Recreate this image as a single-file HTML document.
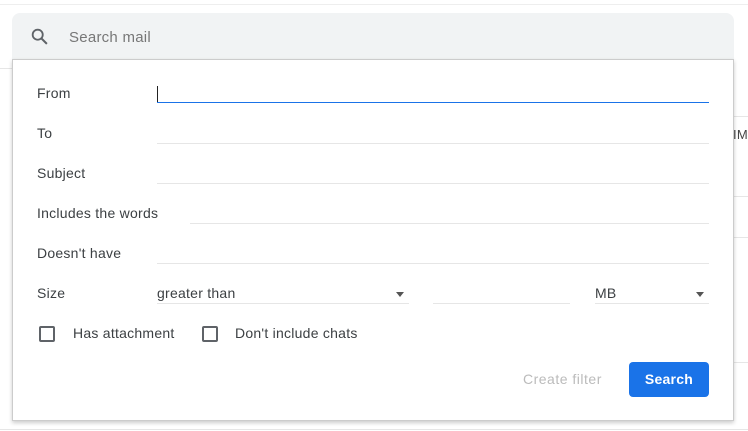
<!DOCTYPE html>
<html><head><style>
body{margin:0;width:748px;height:431px;background:#fff;position:relative;overflow:hidden;font-family:"Liberation Sans",Arial,sans-serif;font-size:14px;color:#222;letter-spacing:0.25px}
.a{position:absolute}
.lab{position:absolute;left:37px;color:#3c4043;font-size:14px}
.ln{position:absolute;height:1px;background:#e6e6e6}
.cb{position:absolute;width:12px;height:12px;border:2px solid #5f6368;border-radius:2px}
</style></head><body>
<div class="a" style="left:0;top:4px;width:748px;height:1px;background:#eee"></div>
<div class="a" style="left:0;top:68px;width:12px;height:1px;background:#e6e6e6"></div>
<div class="a" style="left:734px;top:116px;width:14px;height:1px;background:#e6e6e6"></div>
<div class="a" style="left:734px;top:196px;width:14px;height:1px;background:#e6e6e6"></div>
<div class="a" style="left:734px;top:237px;width:14px;height:1px;background:#e6e6e6"></div>
<div class="a" style="left:734px;top:362px;width:14px;height:1px;background:#e6e6e6"></div>
<div class="a" style="left:0;top:429px;width:748px;height:1px;background:#e6e6e6"></div>
<div class="a" style="left:733px;top:127px;font-size:13px;color:#444">IM</div>
<div class="a" style="left:12px;top:13px;width:722px;height:48px;background:#f1f3f4;border-radius:8px 8px 0 0"></div>
<svg class="a" style="left:29px;top:26px" width="22" height="22" viewBox="0 0 24 24"><circle cx="9.5" cy="9.5" r="5.5" fill="none" stroke="#5f6368" stroke-width="2"/><path d="M13.5 13.5L19.5 19.5" stroke="#5f6368" stroke-width="2.2"/></svg>
<div class="a" style="left:69px;top:29px;font-size:15px;color:#777">Search mail</div>
<div class="a" style="left:12px;top:59px;width:720px;height:360px;background:#fff;border:1px solid #ccc;box-shadow:0 2px 4px rgba(0,0,0,.2)"></div>
<div class="lab" style="top:85px">From</div>
<div class="a" style="left:157px;top:86px;width:1px;height:16px;background:#222"></div>
<div class="a" style="left:157px;top:102px;width:552px;height:1px;background:#1a73e8"></div>
<div class="lab" style="top:125px">To</div><div class="ln" style="left:157px;top:143px;width:552px"></div>
<div class="lab" style="top:165px">Subject</div><div class="ln" style="left:157px;top:183px;width:552px"></div>
<div class="lab" style="top:205px">Includes the words</div><div class="ln" style="left:190px;top:223px;width:519px"></div>
<div class="lab" style="top:245px">Doesn't have</div><div class="ln" style="left:157px;top:263px;width:552px"></div>
<div class="lab" style="top:285px">Size</div>
<div class="a" style="left:157px;top:285px;color:#3c4043">greater than</div>
<div class="a" style="left:396px;top:292px;border:4px solid transparent;border-top:5px solid #555"></div>
<div class="ln" style="left:157px;top:303px;width:252px"></div>
<div class="ln" style="left:433px;top:303px;width:137px"></div>
<div class="a" style="left:595px;top:285px;color:#3c4043">MB</div>
<div class="a" style="left:696px;top:292px;border:4px solid transparent;border-top:5px solid #555"></div>
<div class="ln" style="left:595px;top:303px;width:114px"></div>
<div class="cb" style="left:39px;top:326px"></div>
<div class="a" style="left:73px;top:325px;color:#3c4043">Has attachment</div>
<div class="cb" style="left:202px;top:326px"></div>
<div class="a" style="left:235px;top:325px;color:#3c4043">Don't include chats</div>
<div class="a" style="left:523px;top:371px;color:#bbb;letter-spacing:0.5px">Create filter</div>
<div class="a" style="left:629px;top:362px;width:80px;height:35px;background:#1a73e8;border-radius:4px;color:#fff;font-weight:bold;text-align:center;line-height:35px;font-size:14px">Search</div>
</body></html>
